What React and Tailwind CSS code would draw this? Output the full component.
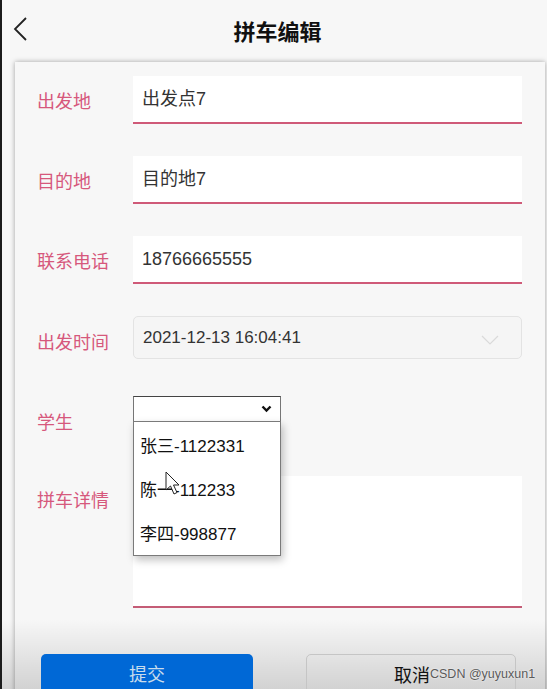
import React from 'react';

const font = { fontFamily: '"Liberation Sans", "Noto Sans CJK SC", Arial, sans-serif' };

function Row({ label, children, className = 'h-[48px] items-center', labelPad = 'pt-[4px]' }) {
  return (
    <div className={`flex ${className}`}>
      <div className={`w-[118px] shrink-0 pl-[22px] text-[18px] text-[#d6587c] ${labelPad}`}>{label}</div>
      {children}
    </div>
  );
}

function TextInput({ value }) {
  return (
    <div className="h-[48px] w-[389px] bg-white border-b-2 border-[#cf5a78] flex items-center pl-[9px] text-[18px] text-[#333]">
      {value}
    </div>
  );
}

export default function App() {
  const students = ['张三-1122331', '陈一-112233', '李四-998877'];

  return (
    <div
      className="relative w-[547px] h-[689px] overflow-hidden bg-[#f7f7f7] border-l-2 border-[#1c1c1c]"
      style={font}
    >
      {/* Header */}
      <header className="relative h-[60px] flex items-center justify-center">
        <svg className="absolute left-[10px] top-[17px]" width="18" height="24" viewBox="0 0 18 24">
          <path d="M14 1 L3 12 L14 23" fill="none" stroke="#222" strokeWidth="1.8" />
        </svg>
        <h1 className="text-[22px] font-bold text-[#111] ml-[6px]" style={{ fontFamily: '"Noto Sans CJK SC", sans-serif' }}>
          拼车编辑
        </h1>
      </header>

      {/* Form card */}
      <div className="ml-[13px] mr-[2px] mt-[2px] h-[700px] bg-[#f7f7f7] shadow-[0_0_5px_rgba(0,0,0,0.35)] pt-[14px] flex flex-col gap-[32px]">
        <Row label="出发地">
          <TextInput value="出发点7" />
        </Row>
        <Row label="目的地">
          <TextInput value="目的地7" />
        </Row>
        <Row label="联系电话">
          <TextInput value="18766665555" />
        </Row>
        <Row label="出发时间" labelPad="pt-[6px]">
          <div className="self-start h-[43px] w-[389px] rounded-[5px] border border-[#e3e3e3] bg-[#f5f5f5] flex items-center justify-between pl-[9px] pr-[22px] text-[17px] text-[#333]">
            <span>2021-12-13 16:04:41</span>
            <svg width="18" height="11" viewBox="0 0 18 11" className="mt-[6px]">
              <path d="M1 1 L9 9 L17 1" fill="none" stroke="#dadada" strokeWidth="1.2" />
            </svg>
          </div>
        </Row>
        <Row label="学生" labelPad="pt-[6px]">
          <div className="self-start h-[26px] w-[148px] bg-white border border-[#767676] border-t-[#444] flex items-center justify-end pr-[8px]">
            <svg width="11" height="8" viewBox="0 0 11 8">
              <path d="M1.5 1.5 L5.5 5.5 L9.5 1.5" fill="none" stroke="#111" strokeWidth="2.4" />
            </svg>
          </div>
        </Row>
        <Row label="拼车详情" className="h-[132px] items-start" labelPad="pt-[12px]">
          <div className="h-[132px] w-[389px] bg-white border-b-2 border-[#c45c76]" />
        </Row>
      </div>

      {/* Native select dropdown */}
      <ul className="absolute left-[131px] top-[421px] w-[148px] h-[135px] bg-white border border-[#7a7a7a] shadow-[2px_4px_8px_rgba(0,0,0,0.25)] pt-[3px]">
        {students.map((s) => (
          <li key={s} className="h-[44px] flex items-center pl-[6px] text-[17px] text-[#111]">
            {s}
          </li>
        ))}
      </ul>

      {/* Mouse cursor */}
      <svg className="absolute left-[163px] top-[471px]" width="16" height="26" viewBox="0 0 16 26">
        <path d="M1 1 L1 19 L5.5 15 L9 23 L12 21.5 L8.5 14 L14 14 Z" fill="#fff" stroke="#222" strokeWidth="1" />
      </svg>

      {/* Bottom gradient */}
      <div className="absolute left-0 right-0 bottom-0 h-[70px] bg-gradient-to-b from-transparent to-black/15 pointer-events-none" />

      {/* Buttons */}
      <div className="absolute left-[39px] top-[654px] flex gap-[53px]">
        <button className="w-[212px] h-[50px] rounded-t-[5px] bg-[#0068d6] text-[18px] text-[#c8dcec] flex justify-center pt-[8px]">
          提交
        </button>
        <button className="w-[210px] h-[50px] rounded-t-[5px] border border-[#c5c5c5] text-[18px] text-[#111] flex pl-[87px] pt-[8px]">
          取消
        </button>
      </div>

      <div className="absolute left-[428px] top-[665px] whitespace-nowrap text-[12.5px] text-[#5a5a5a] [text-shadow:0_0_2px_#fff]">
        CSDN @yuyuxun1
      </div>
    </div>
  );
}
